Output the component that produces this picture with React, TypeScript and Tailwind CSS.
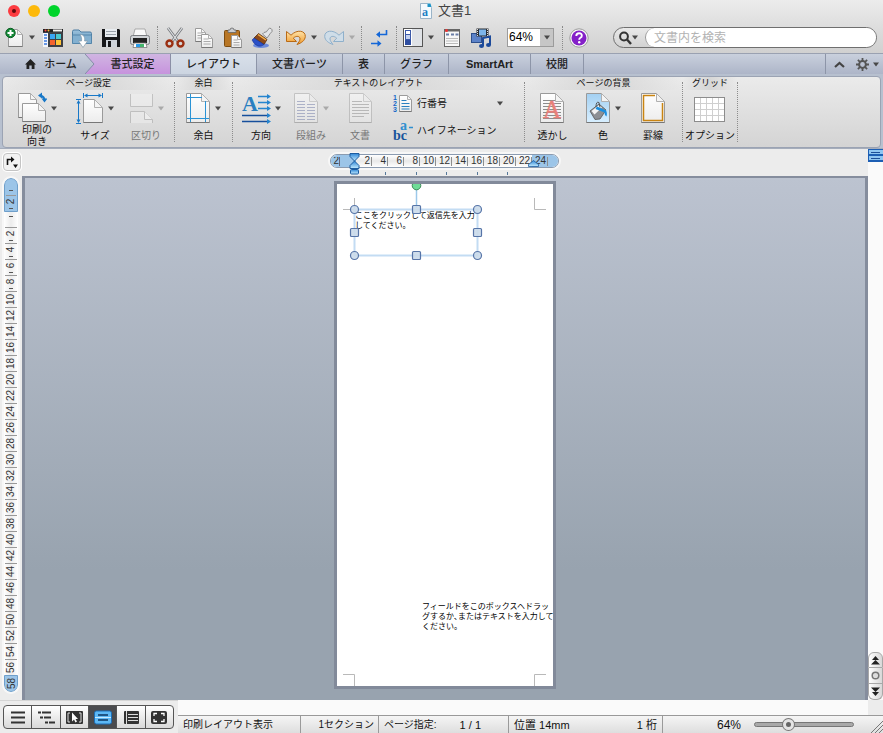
import type { ReactNode } from "react";
import { clsx } from "clsx";

function Arrow({ muted }: { muted?: boolean }) {
  return (
    <svg width="6" height="5" viewBox="0 0 6 5" className="shrink-0">
      <path d="M0 0.5h6L3 4.5z" fill={muted ? "#a9a9a9" : "#484848"} />
    </svg>
  );
}

function Sheet({ x, y, w, h, fold = 8, fill = "url(#paper)" }: { x: number; y: number; w: number; h: number; fold?: number; fill?: string }) {
  return (
    <g stroke="#9a9a9a" strokeWidth="1" strokeLinejoin="round">
      <path d={`M${x} ${y}h${w - fold}l${fold} ${fold}v${h - fold}h${-w}z`} fill={fill} />
      <path d={`M${x} ${y + h}h${w}`} stroke="#777" />
      <path d={`M${x + w - fold} ${y}v${fold}h${fold}z`} fill="#f4f4f4" stroke="#b0b0b0" />
    </g>
  );
}

function Defs() {
  return (
    <svg width="0" height="0" className="absolute" aria-hidden="true">
      <defs>
        <linearGradient id="paper" x1="0" y1="0" x2="0" y2="1">
          <stop offset="0" stopColor="#fff" />
          <stop offset="1" stopColor="#ececec" />
        </linearGradient>
        <linearGradient id="sky" x1="0" y1="0" x2="0" y2="1">
          <stop offset="0" stopColor="#a3d0f2" />
          <stop offset="1" stopColor="#d8efff" />
        </linearGradient>
        <linearGradient id="folder" x1="0" y1="0" x2="0" y2="1">
          <stop offset="0" stopColor="#9cc3de" />
          <stop offset="1" stopColor="#5f92b8" />
        </linearGradient>
        <linearGradient id="orange" x1="0" y1="0" x2="0" y2="1">
          <stop offset="0" stopColor="#ffe3a8" />
          <stop offset="1" stopColor="#f09a2c" />
        </linearGradient>
        <linearGradient id="marker" x1="0" y1="0" x2="0" y2="1">
          <stop offset="0" stopColor="#2f86d6" />
          <stop offset="1" stopColor="#c4ecff" />
        </linearGradient>
        <linearGradient id="tab" x1="0" y1="0" x2="0" y2="1">
          <stop offset="0" stopColor="#c9d0dd" />
          <stop offset="1" stopColor="#adb5c8" />
        </linearGradient>
      </defs>
    </svg>
  );
}

/* ---- standard toolbar ---- */

function ToolSep() {
  return (
    <div className="flex w-[6px] shrink-0 justify-center">
      <div className="h-[24px] border-l border-dotted border-[#8a8a8a]" />
    </div>
  );
}

function Tool({ label, menu, muted, children }: { label: string; menu?: boolean; muted?: boolean; children: ReactNode }) {
  return (
    <button
      aria-label={label}
      className={clsx("flex h-[26px] shrink-0 items-center", menu ? "w-[38px] gap-1 pl-[3px]" : "w-[29px] justify-center")}
    >
      <svg width="22" height="22" viewBox="0 0 22 22" className="shrink-0">
        {children}
      </svg>
      {menu && <Arrow muted={muted} />}
    </button>
  );
}

function Toolbar() {
  return (
    <div className="flex h-[31px] items-center">
      <Tool label="新規" menu>
        <Sheet x={5.5} y={2.5} w={14} h={17} fold={5} />
        <circle cx="7.5" cy="6" r="4.7" fill="#138a36" stroke="#0a5c22" />
        <path d="M7.500 3v6M4.500 6h6" stroke="#fff" strokeWidth="2" />
      </Tool>
      <Tool label="テンプレート">
        <rect x="1" y="2" width="20" height="18" fill="#3d3f45" />
        <path d="M1 2h20v3H1z" fill="#222" />
        <circle cx="3.500" cy="3.500" r="1" fill="#f44" />
        <circle cx="6.500" cy="3.500" r="1" fill="#fb3" />
        <rect x="11" y="2.500" width="9" height="2" fill="#f2f2f2" />
        <rect x="1" y="6" width="5" height="14" fill="#f4f6fa" />
        <path d="M2 8h3M2 11h3M2 14h3M2 17h3" stroke="#3c7be0" strokeWidth="1.500" />
        <rect x="8" y="7" width="5" height="5" fill="#38a5f5" />
        <rect x="14" y="7" width="5" height="5" fill="#48c7d0" />
        <rect x="8" y="13" width="5" height="5" fill="#f5632e" />
        <rect x="14" y="13" width="5" height="5" fill="#ffc438" />
      </Tool>
      <Tool label="開く">
        <path d="M1.500 4.500q0-1.500 1.500-1.500h5l2 2h9q1.500 0 1.500 1.500V16H1.500z" fill="url(#folder)" stroke="#4c7da3" />
        <path d="M1.500 8h19v8.500h-19z" fill="#83b0d0" stroke="#5486ab" />
        <path d="M9 7.500c4 0 5 3 4.600 6.500h3l-4.600 6.500L7.500 14h3c.5-3-.2-4.500-1.500-6.500z" fill="#fff" stroke="#8298a8" strokeWidth=".7" />
      </Tool>
      <Tool label="保存">
        <path d="M2 2h17l1 1v17H2z" fill="#17181a" />
        <rect x="5" y="2" width="12" height="8" fill="#e9edf1" />
        <path d="M6 4.500h10M6 7.500h10" stroke="#9aa2aa" />
        <rect x="6" y="13" width="11" height="7" fill="#cfd4da" />
        <rect x="8" y="14" width="3" height="6" fill="#17181a" />
      </Tool>
      <Tool label="印刷">
        <path d="M6 2h10l2 8H4z" fill="#fbfbfb" stroke="#999" strokeWidth=".8" />
        <rect x="1.500" y="8.500" width="19" height="9" rx="2" fill="#d2d5d8" stroke="#7b7e82" />
        <path d="M4 11h14v5H4z" fill="#222" />
        <path d="M5 16h12l1 4.500H4z" fill="#fff" stroke="#777" strokeWidth=".8" />
        <path d="M7 17h4v3H7z" fill="#2a9be8" />
        <path d="M11 17h4v3h-4z" fill="#43b56b" />
      </Tool>
      <ToolSep />
      <Tool label="カット">
        <path d="M4 1l10 13.500M18 1L8 14.500" stroke="#75787c" strokeWidth="2.800" />
        <path d="M4 1l10 13.500M18 1L8 14.500" stroke="#dfe2e5" strokeWidth="1.200" />
        <circle cx="5.500" cy="16.500" r="3" fill="none" stroke="#9a2f12" strokeWidth="2.400" />
        <circle cx="16.500" cy="16.500" r="3" fill="none" stroke="#9a2f12" strokeWidth="2.400" />
      </Tool>
      <Tool label="コピー">
        <Sheet x={2.5} y={1.5} w={10} h={13} fold={4} />
        <path d="M4.500 6h5M4.500 8.500h6M4.500 11h5" stroke="#999" strokeWidth=".8" />
        <Sheet x={8.5} y={7.5} w={11} h={13} fold={4} />
        <path d="M10.500 12h5M10.500 14.500h7M10.500 17h7" stroke="#999" strokeWidth=".8" />
      </Tool>
      <Tool label="ペースト">
        <rect x="2.500" y="3.500" width="15" height="16" rx="1" fill="#b87625" stroke="#7d4c10" />
        <path d="M6 5.500V3h2q0-2 2-2t2 2h2v2.500z" fill="#c9ccd0" stroke="#666" strokeWidth=".8" />
        <Sheet x={9.5} y={8.5} w={10} h={12} fold={4} />
        <path d="M11.500 13h4M11.500 15.500h6M11.500 18h6" stroke="#999" strokeWidth=".8" />
      </Tool>
      <Tool label="書式のコピー">
        <ellipse cx="10" cy="18.500" rx="8" ry="2.500" fill="#3f6be0" opacity=".7" />
        <path d="M11.500 7l1.500-1.500q3 0 4-3 1.500-2 3-1t1 3q-2 2-3.500 4.500L16 11z" fill="#e3e5e8" stroke="#777" strokeWidth=".8" />
        <path d="M7.500 6.500l8.500 6-3 5-10-6.500z" fill="#8c4a1b" stroke="#55290a" strokeWidth=".8" />
        <path d="M3 11l10 6.500q-3 2.500-6 1.500-4-1.500-6-6z" fill="#2b50c8" stroke="#1a3590" strokeWidth=".6" />
        <path d="M7 7.500l8 5.500" stroke="#f6b247" strokeWidth="1.500" />
      </Tool>
      <ToolSep />
      <Tool label="元に戻す" menu>
        <path d="M1.500 4.500v10h10l-3.200-3.300c3-3 7-2 6.700.8-.2 2-1.500 3.500-3 5.500 4.500-1.500 8-4 8.300-8 .3-6-8.300-7.500-14.300-1.300z" fill="url(#orange)" stroke="#b96a15" />
      </Tool>
      <Tool label="やり直し" menu muted>
        <path d="M20.500 4.500v10h-10l3.200-3.300c-3-3-7-2-6.700.8.2 2 1.500 3.500 3 5.500-4.500-1.500-8-4-8.300-8-.3-6 8.300-7.500 14.300-1.300z" fill="#cfdde8" stroke="#8fb0cb" />
      </Tool>
      <ToolSep />
      <Tool label="編集記号の表示">
        <path d="M18.500 3v4.500H9.500M3 16.500h9" fill="none" stroke="#1467d8" strokeWidth="1.600" />
        <path d="M12 4.300v6.400L8 7.500zM9.500 13.300v6.400l4-3.200z" fill="#1467d8" />
      </Tool>
      <ToolSep />
      <Tool label="サイドバー" menu>
        <rect x="1.500" y="1.500" width="19" height="18" fill="#dfe2e6" stroke="#555" />
        <rect x="2" y="2" width="8" height="17" fill="#fff" />
        <rect x="3.500" y="3.500" width="5" height="4" fill="#fff" stroke="#3d5aa8" />
        <rect x="3.500" y="7.500" width="5" height="5" fill="#c5d2ee" stroke="#3d5aa8" />
        <rect x="3" y="13" width="6" height="5" fill="#2f4ea0" />
      </Tool>
      <Tool label="ツールボックス">
        <rect x="3.500" y="2.500" width="15" height="17" fill="#f8f8f8" stroke="#666" />
        <path d="M3 2h16v2.500H3z" fill="#666" />
        <circle cx="5.500" cy="3.500" r="1.500" fill="#e33" />
        <path d="M5 7.500h3M10 7.500h3M14.500 7.500h3" stroke="#6a7ea8" strokeWidth="2" />
        <path d="M5 11.500h12M5 14h12M5 16.500h12" stroke="#bbb" />
      </Tool>
      <Tool label="メディア">
        <rect x="1.500" y="6.500" width="10" height="9" fill="#5b82c8" stroke="#2d4f8c" />
        <rect x="6.500" y="1.500" width="12" height="8" fill="#2a2d33" />
        <rect x="9" y="2.500" width="7" height="6" fill="#7db5ea" />
        <path d="M7.500 2v7M17.500 2v7" stroke="#ddd" strokeDasharray="1 1" />
        <path d="M13 19v-8l7-1.500V18" fill="none" stroke="#1c4a9a" strokeWidth="2" />
        <ellipse cx="11.500" cy="19" rx="2.500" ry="2" fill="#1c4a9a" />
        <ellipse cx="18.500" cy="18" rx="2.500" ry="2" fill="#1c4a9a" />
      </Tool>
      <div className="relative ml-[12px] h-[19px] w-[47px] shrink-0 border border-[#9b9b9b] bg-white">
        <select aria-label="ズーム" className="block h-full w-full appearance-none pl-px text-[12px] leading-[17px] text-black">
          <option>64%</option>
        </select>
        <span className="pointer-events-none absolute inset-y-0 right-0 flex w-[13px] items-center justify-center bg-[#c6c6c6]">
          <Arrow />
        </span>
      </div>
      <div className="ml-[5px]">
        <ToolSep />
      </div>
      <button aria-label="ヘルプ" className="flex w-[27px] shrink-0 justify-center">
        <svg width="20" height="20" viewBox="0 0 20 20">
          <circle cx="10" cy="10" r="9.200" fill="#f7f7f7" stroke="#9b9b9b" />
          <circle cx="10" cy="10" r="7.500" fill="#8420c8" />
          <path d="M7.300 8q0-2.700 2.800-2.700t2.700 2.400q0 1.300-1.400 2.100-1.200.7-1.200 1.900" fill="none" stroke="#fff" strokeWidth="1.900" />
          <circle cx="10.200" cy="14.200" r="1.200" fill="#fff" />
        </svg>
      </button>
      <div className="ml-[21px] mr-[6px] flex h-[21px] min-w-0 flex-1 items-center rounded-full border border-[#6f6f6f] bg-gradient-to-b from-[#e9e9e9] to-[#d2d2d2]">
        <button aria-label="検索オプション" className="flex w-[31px] shrink-0 items-center pl-[5px]">
          <svg width="13" height="14" viewBox="0 0 13 14">
            <circle cx="5" cy="5.500" r="3.900" fill="none" stroke="#333" strokeWidth="2" />
            <path d="M8 8.500l4 4.500" stroke="#333" strokeWidth="2.400" />
          </svg>
          <Arrow />
        </button>
        <input
          type="search"
          aria-label="文書内を検索"
          placeholder="文書内を検索"
          className="h-[19px] min-w-0 flex-1 rounded-full border-l border-[#999] bg-white pl-[8px] text-[12px] placeholder:text-[#b2b2b2]"
        />
      </div>
    </div>
  );
}

/* ---- ribbon tabs ---- */

const tabs = [
  { name: "レイアウト", cls: "w-[86px] bg-gradient-to-b from-[#d9e0ea] to-[#ccd5e1]", on: true },
  { name: "文書パーツ", cls: "w-[86px]" },
  { name: "表", cls: "w-[42px]" },
  { name: "グラフ", cls: "w-[64px]" },
  { name: "SmartArt", cls: "w-[82px] font-bold" },
  { name: "校閲", cls: "w-[53px]" },
];

function Tabs() {
  return (
    <div className="flex h-[21px] border-t border-[#9aa1b1] bg-gradient-to-b from-[#c9d0dd] to-[#adb5c8] text-[11px] font-medium text-[#222]">
      <button className="relative z-10 flex w-[86px] shrink-0 items-center justify-center gap-2 pl-[16px]">
        <svg width="11" height="10" viewBox="0 0 11 10">
          <path d="M5.500 0L11 5.500H9.500V10H6.700V6.500H4.300V10H1.500V5.500H0z" fill="#222" />
        </svg>
        ホーム
        <svg width="10" height="20" viewBox="0 0 10 20" className="absolute left-[85px] top-0">
          <path d="M0 0l9 10-9 10z" fill="url(#tab)" />
          <path d="M0 0l9 10-9 10" fill="none" stroke="#858ca8" />
        </svg>
      </button>
      <button className="w-[85px] shrink-0 border-r border-[#8b8fa6] bg-gradient-to-b from-[#d0b5e2] to-[#c793dd] pl-[9px]">書式設定</button>
      {tabs.map((t) => (
        <button key={t.name} aria-current={t.on} className={clsx("shrink-0 border-r border-[#8d95a8]", t.cls)}>
          {t.name}
        </button>
      ))}
      <div className="ml-auto flex items-center border-l border-[#8d95a8] pl-[8px] pr-[4px]">
        <button aria-label="リボンを折りたたむ">
          <svg width="11" height="7" viewBox="0 0 11 7">
            <path d="M1 6l4.500-4L10 6" fill="none" stroke="#444" strokeWidth="2.200" />
          </svg>
        </button>
        <button aria-label="リボンの設定" className="ml-[11px] flex items-center gap-1">
          <svg width="13" height="13" viewBox="0 0 13 13">
            <circle cx="6.500" cy="6.500" r="3.400" fill="none" stroke="#555" strokeWidth="2" />
            <path d="M6.500 0v3M6.500 10v3M0 6.500h3M10 6.500h3M1.900 1.900l2.200 2.200M8.900 8.900l2.200 2.200M1.900 11.100l2.200-2.200M8.900 4.100l2.200-2.200" stroke="#555" strokeWidth="1.800" />
          </svg>
          <Arrow />
        </button>
      </div>
    </div>
  );
}

/* ---- ribbon ---- */

function Group({ title, cls, children }: { title: string; cls: string; children: ReactNode }) {
  return (
    <section className={clsx("flex shrink-0 flex-col", cls)}>
      <h2 className="h-[13px] bg-[linear-gradient(90deg,transparent,#d6d6d6_50%,transparent)] text-center text-[9px] leading-[13px] text-[#111]">{title}</h2>
      <div className="flex">{children}</div>
    </section>
  );
}

function GroupSep() {
  return <div className="my-[5px] w-px shrink-0 border-l border-dotted border-[#8c8c8c]" />;
}

type ItemProps = { label: ReactNode; cls: string; w: number; menu?: boolean; off?: boolean; children: ReactNode };

function Item({ label, cls, w, menu, off, children }: ItemProps) {
  return (
    <button disabled={off} className={clsx("flex shrink-0 flex-col items-center pt-[2px]", cls, off ? "text-[#777]" : "text-[#111]")}>
      <span className="flex items-center gap-1">
        <svg width={w} height="32" viewBox={`0 0 ${w} 32`} opacity={off ? 0.45 : 1}>
          {children}
        </svg>
        {menu && <Arrow muted={off} />}
      </span>
      <span className="flex h-[24px] items-center text-[10px] leading-[12px]">{label}</span>
    </button>
  );
}

function Ribbon() {
  return (
    <div className="h-[75px] border-b border-[#a5adbb] bg-[#b7c0cf] px-[2px] pt-[2px]">
      <div className="flex h-[72px] overflow-hidden rounded-[4px] border border-[#9ba3b3] bg-gradient-to-b from-[#ebebeb] to-[#d4d4d4]">
        <Group title="ページ設定" cls="w-[171px]">
          <Item cls="ml-[5px] w-[58px]" w={30} menu label={<>印刷の<br />向き</>}>
            <Sheet x={1.5} y={1.5} w={18} h={24} fold={6} />
            <Sheet x={5.5} y={11.500} w={23} h={18} fold={7} />
            <path d="M23 3.500q4.500 1 4.500 5" fill="none" stroke="#1878c8" strokeWidth="2" />
            <path d="M21 3.500l4-3v6zM24.500 6.500h6l-3 4z" fill="#1878c8" />
          </Item>
          <Item cls="w-[58px]" w={28} menu label="サイズ">
            <Sheet x={7.5} y={7.5} w={19} h={23} />
            <path d="M7.500 1v5M26.500 1v5M9 3.500h16M0 7.500h5M0 31.500h5M2.500 9v21" stroke="#1878c8" />
            <path d="M8 3.500l3.500-2v4zM26 3.500l-3.500-2v4zM2.500 8l-2 3.500h4zM2.500 31l-2-3.500h4z" fill="#1878c8" />
          </Item>
          <Item cls="w-[44px]" w={25} menu off label="区切り">
            <path d="M1.500 2v12.500h22V2" fill="#f3f3f3" stroke="#999" />
            <path d="M1.500 31V19.500h14l8 8V31" fill="#f3f3f3" stroke="#999" />
            <path d="M15.500 19.500v8h8" fill="#fff" stroke="#999" />
          </Item>
        </Group>
        <GroupSep />
        <Group title="余白" cls="w-[57px]">
          <Item cls="w-[57px]" w={25} menu label="余白">
            <Sheet x={0.5} y={1.5} w={23} h={29} />
            <path d="M4.500 2v28M19.500 9v21M1 5.500h15M1 26.500h22" stroke="#2a93d5" />
          </Item>
        </Group>
        <GroupSep />
        <Group title="テキストのレイアウト" cls="w-[291px]">
          <Item cls="ml-[2px] w-[52px]" w={29} menu label="方向">
            <text x="0" y="19" fontSize="22" fontWeight="bold" fontFamily="Liberation Serif, serif" fill="#2a7fc0">A</text>
            <path d="M16 4.500h11M16 10.500h11M16 16.500h11" stroke="#2585cf" strokeWidth="1.500" />
            <path d="M0 23.500h27M0 29.500h27" stroke="#174f9c" strokeWidth="1.500" />
            <path d="M25 2l4 2.500-4 2.500zM25 8l4 2.500-4 2.500zM25 14l4 2.500-4 2.500zM25 21l4 2.500-4 2.500zM25 27l4 2.500-4 2.500z" fill="#2585cf" />
          </Item>
          <Item cls="w-[48px]" w={25} menu off label="段組み">
            <Sheet x={0.5} y={1.5} w={23} h={29} />
            <path d="M3 9.500h8M3 12.500h8M3 15.500h8M3 18.500h8M3 21.500h8M3 24.500h8M3 27.500h8M13 12.500h8M13 15.500h8M13 18.500h8M13 21.500h8M13 24.500h8M13 27.500h8" stroke="#6d78a8" />
          </Item>
          <Item cls="w-[50px]" w={25} off label="文書">
            <Sheet x={1.5} y={1.5} w={22} h={29} />
            <path d="M4 9.500h10M4 12.500h17M4 15.500h17M4 18.500h17M4 21.500h17M4 24.500h12" stroke="#888" />
          </Item>
          <div className="ml-[8px] flex w-[110px] flex-col text-[10px] text-[#111]">
            <button className="flex h-[27px] items-center">
              <svg width="20" height="18" viewBox="0 0 20 18" className="mr-[4px] shrink-0 overflow-visible">
                <g fontSize="7" fontWeight="bold" fontFamily="Liberation Sans, sans-serif" fill="#1467c8">
                  <text x="0" y="5">1</text>
                  <text x="0" y="11">2</text>
                  <text x="0" y="17">3</text>
                </g>
                <Sheet x={6.5} y={0.5} w={12} h={16} fold={4} />
                <path d="M8.500 5.500h5M8.500 8.500h8M8.500 11.500h8M8.500 14h8" stroke="#2a80c0" />
              </svg>
              行番号
              <span className="ml-auto"><Arrow /></span>
            </button>
            <button className="flex h-[27px] items-center whitespace-nowrap">
              <svg width="20" height="26" viewBox="0 0 20 26" className="mr-[4px] shrink-0 overflow-visible">
                <g fontSize="14" fontWeight="bold" fontFamily="Liberation Serif, serif">
                  <text x="7" y="12" fill="#2f8fd0">a</text>
                  <text x="0" y="22" fill="#17549c">bc</text>
                </g>
                <path d="M16 9.500h4" stroke="#2f8fd0" strokeWidth="1.500" />
              </svg>
              ハイフネーション
            </button>
          </div>
        </Group>
        <GroupSep />
        <Group title="ページの背景" cls="w-[157px]">
          <Item cls="ml-[3px] w-[49px]" w={25} label="透かし">
            <Sheet x={0.5} y={1.5} w={23} h={29} />
            <path d="M3 8.500h12M3 11.500h18M3 14.500h18M3 17.500h18M3 20.500h18M3 23.500h18M3 26.500h18" stroke="#8c8c8c" />
            <text x="3" y="26" fontSize="25" fontFamily="Liberation Serif, serif" fill="#e8807a" stroke="#e8807a" strokeWidth=".5">A</text>
          </Item>
          <Item cls="w-[52px]" w={25} menu label="色">
            <Sheet x={0.5} y={1.5} w={23} h={29} fill="url(#sky)" />
            <path d="M4 19l9-7 7 6-6 9-5 .500z" fill="#8d9095" stroke="#555" strokeWidth=".8" />
            <path d="M5.500 19l7.500-6 3 2.500-7.500 7z" fill="#f4f4f4" />
            <path d="M10 15q0-6 3-4.500l1 5" fill="none" stroke="#555" />
            <path d="M11 14.500l7 3q4 1 2.500 7-2-1-2-4l-9-3.500z" fill="#1a8fe0" />
          </Item>
          <Item cls="w-[48px]" w={25} label="罫線">
            <Sheet x={0.5} y={1.5} w={23} h={29} />
            <path d="M14 3.500H2.500v25h19V11" fill="none" stroke="#c98412" strokeWidth="1.500" />
          </Item>
        </Group>
        <GroupSep />
        <Group title="グリッド" cls="w-[54px]">
          <Item cls="w-[54px] whitespace-nowrap" w={32} label="オプション">
            <rect x="0.5" y="5.500" width="30" height="24" fill="#fff" stroke="#8c8c8c" />
            <path d="M6.500 6v23M12.500 6v23M18.500 6v23M24.500 6v23M1 11.500h29M1 17.500h29M1 23.500h29" stroke="#cfcfcf" />
          </Item>
        </Group>
        <GroupSep />
      </div>
    </div>
  );
}

/* ---- rulers ---- */

const across = [2, 4, 6, 8, 10, 12, 14, 16, 18, 20, 22];
const down = Array.from({ length: 28 }, (_, i) => (i + 1) * 2);

function HRuler() {
  const cell = "flex h-[9px] w-[16px] shrink-0 items-center justify-end border-r border-[#8e8e8e] pr-px";
  return (
    <div className="relative text-[10px] leading-[10px] text-[#333]">
      <div className="flex h-[14px] items-center overflow-hidden rounded-full border border-[#8b9bb0] bg-gradient-to-b from-white via-[#e9e9e9] to-white ring-2 ring-white/60">
        <div className="flex h-full w-[25px] items-center bg-[#9cc5e8]">
          <span className="flex h-[9px] w-[9px] items-center justify-end overflow-hidden border-r border-[#667]">2</span>
        </div>
        {across.map((n) => (
          <span key={n} className={cell}>{n}</span>
        ))}
        <div className="flex h-full w-[26px] items-center bg-[#9cc5e8]">
          <span className={cell}>24</span>
        </div>
      </div>
      <svg width="229" height="24" viewBox="0 0 229 24" className="absolute left-0 -top-px">
        <g stroke="#1d5ca0" fill="url(#marker)">
          <path d="M20 .5h9v3L24.500 8 20 3.500z" />
          <path d="M24.500 8l4.500 4.500v3h-9v-3z" />
          <rect x="20.500" y="16.500" width="8" height="4.500" rx="1" />
          <path d="M203.500 7.500l5 4v2h-10v-2z" strokeWidth=".8" />
        </g>
        <path d="M55.500 19v3M86.500 19v3M116.500 19v3M147.500 19v3M177.500 19v3" stroke="#557799" />
      </svg>
    </div>
  );
}

function VCell({ n, dash }: { n?: number; dash?: boolean }) {
  return (
    <div className="mx-px flex h-[16px] flex-col items-center justify-around border-t border-[#999]">
      {n && <span className="flex h-[7px] items-center justify-center -rotate-90">{n}</span>}
      {dash && <span className="h-px w-[4px] bg-[#555]" />}
    </div>
  );
}

function VRuler() {
  return (
    <div className="w-[22px] shrink-0 pl-[4px] pt-[2px]">
      <div className="w-[14px] overflow-hidden rounded-full bg-gradient-to-r from-white via-[#ececec] to-white text-[10px] leading-[7px] text-[#333] ring-2 ring-white/60">
        <div className="rounded-t-full border border-[#6f9fca] bg-[#9cc5e8]">
          <div className="flex h-[16px] items-end justify-center pb-[4px]">
            <span className="h-px w-[4px] bg-[#555]" />
          </div>
          <VCell n={2} dash />
        </div>
        <div className="flex h-[15px] items-start justify-center pt-[4px]">
          <span className="h-px w-[4px] bg-[#555]" />
        </div>
        {down.map((n) => (
          <VCell key={n} n={n} dash={n < 10} />
        ))}
        <div className="h-[17px] rounded-b-full border border-[#6f9fca] bg-[#9cc5e8]">
          <span className="flex h-[15px] items-center justify-center -rotate-90">58</span>
        </div>
      </div>
    </div>
  );
}

/* ---- document ---- */

function Paper() {
  return (
    <article className="relative h-[502px] w-[216px] shrink-0 bg-white text-[8px] leading-[10px] text-black shadow-[0_0_0_3px_#828a9a]">
      <p className="absolute left-[18px] top-[27px] w-[122px]">ここをクリックして返信先を入力してください。</p>
      <p className="absolute left-[85px] top-[418px] whitespace-nowrap">
        フィールドをこのボックスヘドラッ<br />
        グするか､またはテキストを入力して<br />
        ください。
      </p>
      <svg width="216" height="502" viewBox="0 0 216 502" className="absolute left-0 top-0">
        <path d="M6 25.500h11.500V14M209 25.500h-11.500V14M6 490.500h11.500V502M209 490.500h-11.500V502" fill="none" stroke="#b9b9b9" />
        <rect x="17.500" y="25.500" width="123" height="46" fill="none" stroke="#c3dcf3" strokeWidth="2" />
        <path d="M79.500 4v20" stroke="#9cc8ea" strokeWidth="1.500" />
        <circle cx="79.500" cy="1.500" r="4.300" fill="#6fdc97" stroke="#3c8a58" />
        <g fill="#cbdaea" fillOpacity=".9" stroke="#5775a8" strokeWidth="1.200">
          <circle cx="17.500" cy="25.500" r="4" />
          <circle cx="140.500" cy="25.500" r="4" />
          <circle cx="17.500" cy="71.500" r="4" />
          <circle cx="140.500" cy="71.500" r="4" />
          <rect x="75.500" y="21.500" width="8" height="8" rx="1" />
          <rect x="75.500" y="67.500" width="8" height="8" rx="1" />
          <rect x="13.500" y="44.500" width="8" height="8" rx="1" />
          <rect x="136.500" y="44.500" width="8" height="8" rx="1" />
        </g>
      </svg>
    </article>
  );
}

function ScrollBar() {
  const btn = "flex h-[16px] w-full items-center justify-center border-x border-b border-[#a8a8a8] bg-gradient-to-r from-white to-[#d8d8d8]";
  return (
    <div className="flex w-[15px] shrink-0 flex-col bg-[#fafafa]">
      <button aria-label="ウィンドウの分割" className="h-[13px] shrink-0">
        <svg width="15" height="13" viewBox="0 0 15 13">
          <rect width="15" height="13" fill="#1d5fb4" />
          <path d="M1 1h14v4H1zM1 7h14v4H1z" fill="#8fc6f2" />
          <path d="M3 3.500h9M3 9.500h9" stroke="#1d4f98" />
        </svg>
      </button>
      <div className="mt-auto">
        <button aria-label="前のページ" className={clsx(btn, "rounded-t-[6px] border-t")}>
          <svg width="9" height="9" viewBox="0 0 9 9"><path d="M4.500 0L8 4H1zM4.500 4L9 8.500H0z" fill="#222" /></svg>
        </button>
        <button aria-label="ブラウズの選択" className={btn}>
          <svg width="9" height="9" viewBox="0 0 9 9"><circle cx="4.500" cy="4.500" r="3.300" fill="#ddd" stroke="#777" strokeWidth="1.500" /></svg>
        </button>
        <button aria-label="次のページ" className={clsx(btn, "rounded-b-[6px]")}>
          <svg width="9" height="9" viewBox="0 0 9 9"><path d="M4.500 5L9 .500H0zM4.500 9L8 5H1z" fill="#222" /></svg>
        </button>
      </div>
    </div>
  );
}

/* ---- status bar ---- */

const views = [
  { name: "下書き", icon: <path d="M3 4.500h14M3 9.500h14M3 14.500h14" stroke="#333" strokeWidth="2" /> },
  { name: "アウトライン", icon: <path d="M2 4.500h3M6 4.500h9M4 9.500h3M8 9.500h7M9 14.500h3M13 14.500h6" stroke="#333" strokeWidth="2" /> },
  {
    name: "パブリッシング",
    icon: (
      <>
        <rect x="2" y="3" width="17" height="13" rx="1" fill="#333" />
        <path d="M6 5H4v9h2M15 5h2v9h-2" fill="none" stroke="#ddd" />
        <path d="M8 4.500v9l2-2 1.500 3 1.500-1-1.500-2.500H14z" fill="#fff" />
      </>
    ),
  },
  {
    name: "印刷レイアウト",
    icon: (
      <>
        <rect x="1.500" y="3" width="17" height="13" rx="2" fill="#5db8f5" stroke="#1d6fb8" />
        <path d="M5 7h10M5 12h10" stroke="#0c3560" strokeWidth="1.500" />
        <path d="M2 9.500h16" stroke="#c9ebff" />
      </>
    ),
  },
  {
    name: "ノート",
    icon: (
      <>
        <rect x="3" y="3" width="15" height="13" rx="1" fill="#333" />
        <path d="M7 6.500h10M7 9.500h10M7 12.500h10M5.500 3v13" stroke="#ddd" />
      </>
    ),
  },
  {
    name: "全画面",
    icon: (
      <>
        <rect x="2" y="3" width="16" height="13" rx="2" fill="#333" />
        <path d="M5 8V5.500h3M12 5.500h3V8M15 11v2.500h-3M8 13.500H5V11" fill="none" stroke="#fff" strokeWidth="1.300" />
      </>
    ),
  },
];

function StatusBar() {
  const cell = "flex shrink-0 items-center border-r border-[#9a9a9a]";
  return (
    <footer className="flex h-[33px] shrink-0 bg-[#ececec]">
      <div className="w-[178px] shrink-0 border-t border-[#d5d5d5] pl-[3px] pt-[4px]">
        <div className="flex h-[24px] w-[171px] overflow-hidden rounded-[4px] border border-[#555] bg-gradient-to-b from-white to-[#d9d9d9]">
          {views.map((v, i) => (
            <button
              key={v.name}
              aria-label={v.name}
              className={clsx("flex flex-1 items-center justify-center", i < 5 && "border-r border-[#555]", i === 3 && "bg-[#4a4b4e]")}
            >
              <svg width="20" height="19" viewBox="0 0 20 19">{v.icon}</svg>
            </button>
          ))}
        </div>
      </div>
      <div className="flex min-w-0 flex-1 flex-col">
        <div className="h-[15px] shrink-0 pr-[15px]">
          <div className="h-full bg-[#fafafa]" />
        </div>
        <div className="flex flex-1 border-t border-[#999] bg-gradient-to-b from-[#f5f5f5] to-[#dedede] text-[10px] leading-[12px] text-[#111]">
          <div className={clsx(cell, "w-[123px] pl-[5px]")}>印刷レイアウト表示</div>
          <div className={clsx(cell, "w-[78px] justify-end pr-[4px]")}>1セクション</div>
          <div className={clsx(cell, "w-[130px] gap-[23px] pl-[5px] text-[11px]")}>
            <span className="text-[10px]">ページ指定:</span>
            <span>1 / 1</span>
          </div>
          <div className={clsx(cell, "w-[154px] justify-between px-[5px] text-[11px]")}>
            <span>位置 14mm</span>
            <span>1 桁</span>
          </div>
          <div className="flex min-w-0 flex-1 items-center pl-[54px]">
            <label htmlFor="zoom" className="w-[37px] shrink-0 text-[12px]">64%</label>
            <input
              id="zoom"
              type="range"
              defaultValue={32}
              className="h-[5px] w-[100px] appearance-none rounded-full border border-[#777] bg-[#a9a9a9] [&::-webkit-slider-thumb]:h-[11px] [&::-webkit-slider-thumb]:w-[11px] [&::-webkit-slider-thumb]:appearance-none [&::-webkit-slider-thumb]:rounded-full [&::-webkit-slider-thumb]:border-[3px] [&::-webkit-slider-thumb]:border-[#e4e4e4] [&::-webkit-slider-thumb]:bg-[#666] [&::-webkit-slider-thumb]:shadow-[0_0_0_1px_#777]"
            />
            <svg width="12" height="12" viewBox="0 0 12 12" className="ml-auto self-end">
              <path d="M0 12L12 0M4 12l8-8M8 12l4-4" stroke="#777" />
            </svg>
          </div>
        </div>
      </div>
    </footer>
  );
}

export default function App() {
  return (
    <div className="flex min-h-screen flex-col bg-[#ececec] font-['Liberation_Sans','Noto_Sans_CJK_JP',sans-serif]">
      <Defs />
      <header className="shrink-0 rounded-t-[5px] bg-gradient-to-b from-[#ececec] to-[#d0d0d0]">
        <div className="flex h-[22px] items-center">
          <div className="flex flex-1 gap-[8px] pl-[8px]">
            <button aria-label="閉じる" className="flex h-[12px] w-[12px] items-center justify-center rounded-full bg-[#fc3b40]">
              <span className="h-[4px] w-[4px] rounded-full bg-[#5e0a0c]" />
            </button>
            <button aria-label="しまう" className="h-[12px] w-[12px] rounded-full bg-[#fdb90b]" />
            <button aria-label="拡大" className="h-[12px] w-[12px] rounded-full bg-[#00d42b]" />
          </div>
          <h1 className="flex items-center gap-[6px] text-[13px] leading-[20px] text-[#444]">
            <svg width="12" height="16" viewBox="0 0 12 16">
              <path d="M.500.500h7l4 4v11H.500z" fill="#f4f9fd" stroke="#9ab4c8" />
              <path d="M.500.500h7v3.500h4l-1-3.500z" fill="#1c93c8" />
              <text x="2" y="13" fontSize="12" fontWeight="bold" fontFamily="Liberation Serif, serif" fill="#1d7fc4">a</text>
            </svg>
            文書1
          </h1>
          <div className="flex-1" />
        </div>
        <Toolbar />
      </header>
      <Tabs />
      <Ribbon />
      <main className="flex flex-1">
        <div className="flex min-w-0 flex-1 flex-col">
          <div className="flex h-[27px] shrink-0">
            <div className="w-[21px] shrink-0 pl-[3px] pt-[4px]">
              <button aria-label="タブの種類" className="h-[18px] w-[18px] rounded-[4px] border border-[#c4c4c4] bg-[#f2f2f2] ring-1 ring-white">
                <svg width="16" height="16" viewBox="0 0 16 16">
                  <path d="M3.500 11V5.500H8" fill="none" stroke="#111" strokeWidth="1.600" />
                  <path d="M7 2.500l3.500 3L7 8.500zM9 10.500h5l-2.500 3.500z" fill="#111" />
                </svg>
              </button>
            </div>
            <div className="flex flex-1 justify-center pt-[5px]">
              <HRuler />
            </div>
          </div>
          <div className="flex flex-1">
            <VRuler />
            <div className="flex flex-1 justify-center border-x-[3px] border-t-2 border-[#858d9d] bg-[linear-gradient(#bcc3d0,#98a3af_75%)] pb-[14px] pt-[6px]">
              <Paper />
            </div>
          </div>
        </div>
        <ScrollBar />
      </main>
      <StatusBar />
    </div>
  );
}
